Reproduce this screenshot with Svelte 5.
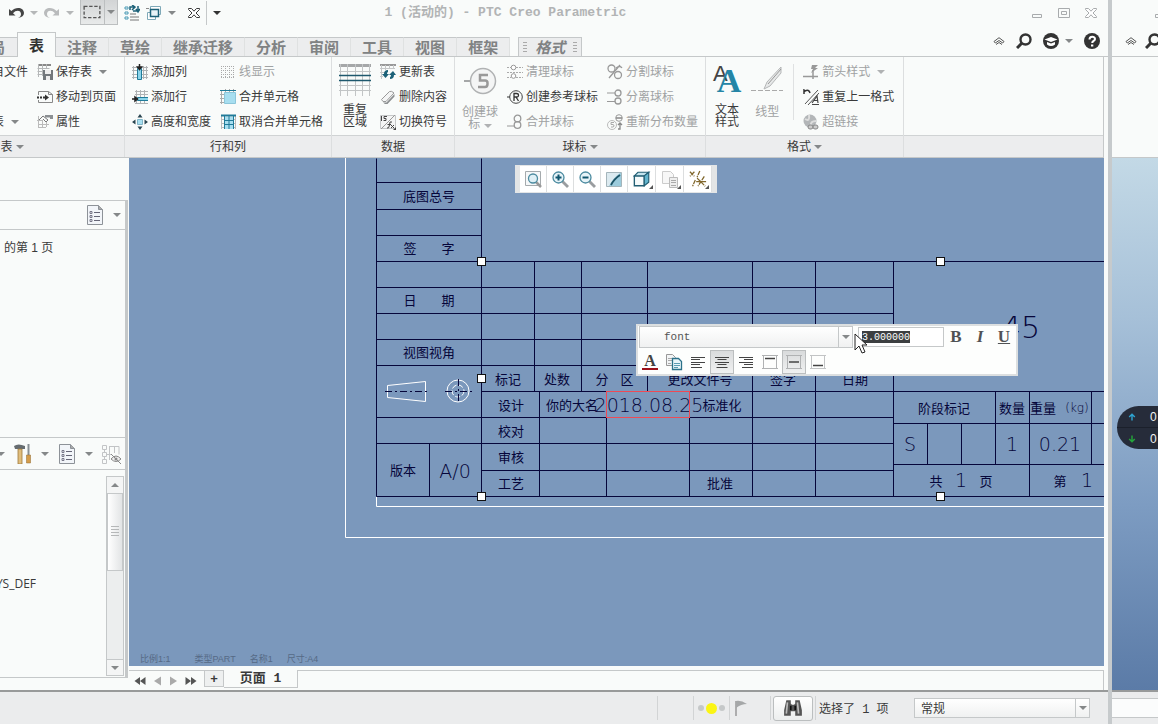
<script lang="ts">
  type Tool = { icon?: string; label: string; off?: boolean; menu?: boolean };

  /**
   * Inner markup of every icon, drawn on the view box given beside it.
   */
  const icons: Record<string, [string, string]> = {
    undo: ['0 0 16 14', '<path d="M1 3v6.500h6.500L5 7.200C8 3.500 13 4 13 8c0 2-1 3-3 4 4-.5 6-2.500 6-5C16 1.500 8 0 3.400 5z" fill="#444"/>'],
    redo: ['0 0 16 14', '<path d="M15 3v6.500H8.500L11 7.200C8 3.500 3 4 3 8c0 2 1 3 3 4-4-.5-6-2.500-6-5C0 1.500 8 0 12.600 5z" fill="#b9bbbc"/>'],
    marquee: ['0 0 16 14', '<rect x="1" y="2" width="14" height="10" fill="none" stroke="#555" stroke-width="1.200" stroke-dasharray="3 1.500"/>'],
    regen: ['0 0 16 16', '<path d="M1 2h3v2H1zM1 7h3v2H1zM1 12h3v2H1z" fill="none" stroke="#4a9ab5"/><path d="M6 12h9M6 15h9M6 9h6" stroke="#777"/><path d="M6 5V2h5M8 0l3 2-3 3M14 1v5H9M12 4l2 3 2-3" fill="none" stroke="#1c6178" stroke-width="1.500"/>'],
    windows: ['0 0 16 16', '<path d="M4.500 1.500h10v8h-10z" fill="#fff" stroke="#7fa9b8"/><path d="M1.500 7.500h8v7h-8z" fill="#fff" stroke="#7fa9b8"/><path d="M4.500 4.500h8v7h-8z" fill="#e8f3f7" stroke="#1c6178" stroke-width="1.500"/><path d="M0 3.500h3" stroke="#888"/>'],
    close: ['0 0 12 12', '<path d="M.5 1.500h3L6 4.200 8.500 1.500h3v1L8 6l3.500 3.500v1h-3L6 7.800l-2.500 2.700h-3v-1L4 6 .5 2.500z" fill="#fff" stroke="currentColor"/>'],
    min: ['0 0 12 12', '<path d="M1.500 7.500h9v3h-9z" fill="none" stroke="#a8abad"/>'],
    max: ['0 0 12 12', '<path d="M.5 1.500h11v9H.5zM3.500 4.500h5v3h-5z" fill="none" stroke="#a8abad"/>'],
    chevron: ['0 0 12 8', '<path d="M1 4.500L6 .7l5 3.800L9.700 6 6 3.500 2.300 6z" fill="none" stroke="#555"/><path d="M3 7.500l3-2 3 2" fill="none" stroke="#555"/>'],
    search: ['0 0 16 16', '<circle cx="9.500" cy="6.500" r="5" fill="none" stroke="#333" stroke-width="2.400"/><path d="M6 10l-5 5" stroke="#333" stroke-width="3"/>'],
    learn: ['0 0 16 16', '<circle cx="8" cy="8" r="8" fill="#333"/><path d="M1.500 6.500L8 4l6.500 2.500L8 9zM4 9v2.500q4 3 8 0V9L8 10.500z" fill="#fff"/>'],
    help: ['0 0 16 16', '<circle cx="8" cy="8" r="8" fill="#333"/><path d="M5.500 6.500C5.500 3 11 3 11 6c0 2-2.800 1.800-2.800 4" fill="none" stroke="#fff" stroke-width="2"/><path d="M7 11.500h2.300v2H7z" fill="#fff"/>'],
    save: ['0 0 16 16', '<path d="M1 1h13" stroke="#888" stroke-width="2"/><path d="M.5 4.500h12M.5 7.500h5M.5 10.500h5M1.500 0v13M5.500 0v12M9.500 0v5" stroke="#b5b7b8"/><path d="M6 6h10v10H6z" fill="#73787c"/><path d="M8 6h6v4H8zM9 12h4v4H9z" fill="#eee"/>'],
    toPage: ['0 0 16 16', '<path d="M1.500 6V2.500h10l4 3v8h-14V11M11.500 2.500v3h4" fill="none" stroke="#888"/><path d="M0 8.500h9" stroke="#333" stroke-width="2" stroke-dasharray="2 1"/><path d="M8 5.500l4 3-4 3z" fill="#333"/>'],
    props: ['0 0 16 16', '<path d="M1.500 2v12M5.500 6v8M9.500 8v5M0 6.500h6M1 10.500h11M1 13.500h8" stroke="#bbb"/><path d="M8 1h8v4h-3V3.500H8z" fill="#8c9093"/><path d="M2 6l4-4 5 4-2 2-3-3" fill="none" stroke="#777"/>'],
    addCol: ['0 0 16 16', '<path d="M0 3.500h16M0 6.500h16M0 10.500h16M0 13.500h16M1.500 2v13M11.500 2v13M14.500 2v13" stroke="#b0b3b5"/><path d="M5.500 4.500h4v11h-4z" fill="#8bd4ea" stroke="#207b99"/><path d="M7.500 0v3M5.500 3l2 2.500 2-2.500z" stroke="#222" fill="#222" stroke-width="1.500"/>'],
    addRow: ['0 0 16 16', '<path d="M3 2.500h13M3 5.500h13M3 14.500h13M4.500 1v14M8.500 1v14M12.500 1v14" stroke="#b0b3b5"/><path d="M5.500 8.500h11v3h-11z" fill="#8bd4ea" stroke="#207b99"/><path d="M0 10h3M3 8l2.500 2L3 12z" stroke="#222" fill="#222" stroke-width="1.500"/>'],
    size: ['0 0 16 16', '<path d="M5.500 5.500h5v5h-5z" fill="#a8dff0" stroke="#7fb5c8"/><path d="M8 0l2.500 3.500h-5zM8 16l2.500-3.500h-5zM0 8l3.500-2.500v5zM16 8l-3.500-2.500v5z" fill="#29444f"/>'],
    lines: ['0 0 16 16', '<path d="M1 2.500h13M1 6.500h13M1 10.500h13M1 13.500h13M1.500 2v12M5.500 2v12M9.500 2v12M13.500 2v12" stroke="#aaa" stroke-dasharray="1 1"/>'],
    merge: ['0 0 16 16', '<path d="M0 1.500h16M0 5.500h4M0 9.500h4M0 13.500h4M1.500 1v14M5.500 0v3M9.500 0v3M13.500 0v3" stroke="#aaa"/><path d="M4.500 3.500h11v11h-11z" fill="#a7def0" stroke="#8cc6da"/><path d="M0 1.500h16" stroke="#207b99"/>'],
    unmerge: ['0 0 16 16', '<path d="M1 5.500h14M1 9.500h14M1 13.500h14M1.500 1v14M15.500 1v14" stroke="#bbb"/><path d="M4 3h10v12H4z" fill="#a7def0"/><path d="M1 1.500h15" stroke="#207b99" stroke-width="2"/><path d="M4 6.500h10M4 10.500h10M4.500 2v13M9 2v13M13.500 2v13" stroke="#207b99"/>'],
    region: ['0 0 32 32', '<path d="M0 1.500h32" stroke="#a5a7a8" stroke-width="3"/><path d="M0 7.500h32M0 21.500h32M0 26.500h32M1.500 0v32M8.500 0v32M16.500 0v32M23.500 0v32M30.500 0v32" stroke="#c2c5c6"/><path d="M0 11.500h32M0 16.500h32" stroke="#1d586d" stroke-width="1.500"/>'],
    update: ['0 0 16 16', '<path d="M0 1h16" stroke="#999" stroke-width="2"/><path d="M0 4.500h15M0 8.500h5M0 12.500h3M1.500 1v14M5.500 1v5M9.500 1v4M13.500 1v4" stroke="#c5c7c8"/><path d="M8 6q-4 0-4 4H2l3.500 4L9 10H7q0-2 1-2zM10 15q4 0 4-4h2l-3-4-4 4h2q0 2-1 2z" fill="#1c6178"/>'],
    erase: ['0 0 16 16', '<path d="M1.500 10.500l8-8q2-1 4.500 1.500l-8 8.500H3z" fill="#f4f5f5" stroke="#999"/><path d="M3 13.500h3.500L14.500 5v2.500L7.500 15H5z" fill="#8c8f91"/>'],
    swap: ['0 0 16 16', '<path d="M.5 1.500h15v13H.5z" fill="#f4f5f5" stroke="#c5c7c8"/><path d="M1 15L15 1" stroke="#999"/><path d="M1.500 2v5M7 2.500H4v2h2v2H3.500M7 14q2 1 2.500-3L10 8h2M7.500 10.500H11M11 14l3-3M11 11l3 3" fill="none" stroke="#444"/><path d="M13 16h3v-3z" fill="#444"/>'],
    balloon: ['0 0 34 32', '<path d="M1 16h7" stroke="#a5a7a8" stroke-width="2"/><circle cx="20" cy="16" r="12.500" fill="#f4f5f5" stroke="#b0b2b3" stroke-width="1.500"/><path d="M25 10h-8v5.500h5q2.500 0 2.500 2.500v1q0 3-2.500 3h-7" fill="none" stroke="#999" stroke-width="2.500"/>'],
    clean: ['0 0 16 16', '<path d="M0 3.500h4M9 3.500h7M0 8.500h16M0 13.500h4M9 13.500h7" stroke="#aaa" stroke-dasharray="2 1"/><circle cx="6.500" cy="3.500" r="2.300" fill="#fff" stroke="#999"/><circle cx="6.500" cy="12" r="2.300" fill="#fff" stroke="#999"/>'],
    refBalloon: ['0 0 16 16', '<path d="M0 8h3" stroke="#333"/><circle cx="9" cy="8" r="6.300" fill="none" stroke="#444"/><path d="M7 12V4.500h2.500q2 0 2 1.800T9.500 8H7M9 8l2.500 4" fill="none" stroke="#333" stroke-width="1.300"/>'],
    joinBalloon: ['0 0 16 16', '<path d="M0 12h8" stroke="#999"/><circle cx="10.500" cy="4.500" r="3.300" fill="none" stroke="#999" stroke-width="1.300"/><circle cx="10.500" cy="11" r="3.300" fill="none" stroke="#999" stroke-width="1.300"/>'],
    splitBalloon: ['0 0 16 16', '<circle cx="4.500" cy="4.500" r="3.500" fill="none" stroke="#999" stroke-width="1.300"/><circle cx="11" cy="11" r="3.500" fill="none" stroke="#999" stroke-width="1.300"/><path d="M13 1L2 14M9 4q4-3 6 0" stroke="#999" stroke-width="1.300" fill="none"/>'],
    detach: ['0 0 16 16', '<path d="M0 4h8M0 12.500h8" stroke="#999"/><circle cx="11" cy="4" r="3" fill="none" stroke="#999" stroke-width="1.300"/><circle cx="11" cy="12" r="3" fill="none" stroke="#999" stroke-width="1.300"/>'],
    redistribute: ['0 0 16 16', '<circle cx="5" cy="11" r="4.500" fill="none" stroke="#bbb"/><path d="M7 8.500H4v2h2q1 0 1 1.500T4 13" fill="none" stroke="#aaa"/><circle cx="12" cy="4" r="3.300" fill="none" stroke="#999"/><path d="M9 4h6M11 15h2V9M11 11l2-2 2 2" fill="none" stroke="#888" stroke-width="1.300"/>'],
    lineType: ['0 0 34 32', '<path d="M1 25.500h32" stroke="#aaa" stroke-dasharray="5 2"/><path d="M31 2v6L20 21l-6 3 3-7z" fill="#e6e8e8" stroke="#b5b7b8"/><path d="M31 4L18 19" stroke="#999"/>'],
    arrowStyle: ['0 0 16 16', '<path d="M0 12.500h15M10 15V6" stroke="#999" stroke-width="1.500"/><path d="M9 1h6l-3 3h3L8 9l2-4H8z" fill="#999"/>'],
    repeat: ['0 0 16 16', '<path d="M2 15L15 1M5 16L16 4" stroke="#555"/><path d="M1 5V1l1 1q4-2 5 2" fill="none" stroke="#333" stroke-width="1.500"/><path d="M9 14l5-7 1 7M11 11.500h4M9 15.500h7" fill="none" stroke="#444" stroke-width="1.200"/>'],
    link: ['0 0 16 16', '<circle cx="7" cy="7" r="6.500" fill="#b3b6b8"/><path d="M2 5q5 3 4-4M8 12q-1-5 5-5" stroke="#ddd" stroke-width="2" fill="none"/><rect x="5" y="11" width="5" height="4" rx="2" fill="#ccc" stroke="#888"/><rect x="10" y="11" width="5" height="4" rx="2" fill="#ccc" stroke="#888"/>'],
    sheet: ['0 0 16 20', '<path d="M.5.500h11l4 4v15H.5z" fill="#f2f5f9" stroke="#8d9298"/><path d="M11.500.500v4h4" fill="#aaa" stroke="#8d9298"/><path d="M7 7.500h6M7 11.500h6M7 15.500h6" stroke="#667"/><path d="M3 6.500h2v2H3zM3 10.500h2v2H3zM3 14.500h2v2H3z" fill="none" stroke="#778"/>'],
    tools: ['0 0 18 20', '<path d="M0 2q4-3 11 0v3H1z" fill="#666c70"/><path d="M4 5h4v15H4z" fill="#e0bd7c" stroke="#a07a3a" stroke-width=".8"/><path d="M14.500 0v11" stroke="#888f94" stroke-width="2"/><path d="M12.500 11h4v8h-4z" fill="#d49c4b" stroke="#90682c" stroke-width=".5"/>'],
    tree: ['0 0 20 20', '<path d="M1.500 1.500h4v4h-4zM1.500 8.500h4v4h-4zM1.500 15.500h4v4h-4zM3.500 5v3M3.500 12v3M5 10.500h6M8.500 3v13M8 2.500h10v8M13.500 3v6" fill="none" stroke="#c2c4c6"/><path d="M10 15q5-6 10 0-5 5-10 0z" fill="#eee" stroke="#888"/><circle cx="15" cy="15" r="1.500" fill="#888"/><path d="M10 10l10 10" stroke="#888"/>'],
    fit: ['0 0 18 18', '<path d="M1.500 1.500h15v14h-15z" fill="#f6f8f9" stroke="#a5aaad"/><path d="M12 12l5 5" stroke="#999" stroke-width="2.500"/><circle cx="9" cy="8.500" r="4.500" fill="#dff0f6" stroke="#4c8ba0" stroke-width="1.300"/>'],
    zoomIn: ['0 0 18 18', '<path d="M10 10l7 7" stroke="#9a9da0" stroke-width="2.800"/><circle cx="7.500" cy="7.500" r="5.500" fill="#e6f3f8" stroke="#4c8ba0" stroke-width="1.300"/><path d="M4.500 7.500h6M7.500 4.500v6" stroke="#10566e" stroke-width="2"/>'],
    zoomOut: ['0 0 18 18', '<path d="M10 10l7 7" stroke="#9a9da0" stroke-width="2.800"/><circle cx="7.500" cy="7.500" r="5.500" fill="#e6f3f8" stroke="#4c8ba0" stroke-width="1.300"/><path d="M4.500 7.500h6" stroke="#10566e" stroke-width="2"/>'],
    repaint: ['0 0 18 18', '<path d="M1.500 2.500h15v14h-15z" fill="#9bcbdc" stroke="#a5b5bb"/><path d="M2 3h13Q8 8 4 16H2z" fill="#dceaf0"/><path d="M15 5Q9 9 6 15" stroke="#1c5366" stroke-width="1.800" fill="none"/>'],
    cube: ['0 0 20 18', '<path d="M1.500 5.500h11v11h-11z" fill="#f5fafb" stroke="#235f74" stroke-width="1.500"/><path d="M1.500 5.500l4-4h12l-5 4z" fill="#c4e4ee" stroke="#235f74" stroke-width="1.300"/><path d="M12.500 5.500l5-4v11l-5 4z" fill="#62b4cd" stroke="#235f74" stroke-width="1.300"/>'],
    views: ['0 0 18 18', '<path d="M1.500 1.500h8l3 3v9h-11z" fill="#f7f7f7" stroke="#ccc"/><path d="M8.500 7.500h8v10h-8z" fill="#eee" stroke="#bbb"/><path d="M10 10.500h5M10 12.500h5M10 15.500h5" stroke="#aaa"/>'],
    datum: ['0 0 20 18', '<path d="M1 1l5 5M6 1L1 6M12 0L9 7M7 10L4 17M17 6l-7 11M9 8l9 9M8 12h11" stroke="#81672c" stroke-width="1.400" stroke-dasharray="5 1"/>'],
    copy: ['0 0 18 18', '<path d="M1.500 1.500h6l3 3v8h-9z" fill="#f3f5f6" stroke="#999"/><path d="M3 5.500h5M3 7.500h5M3 10.500h3" stroke="#aaa"/><path d="M7.500 5.500h6l3 3v8h-9z" fill="#eaf6fa" stroke="#2b7189" stroke-width="1.300"/><path d="M9 10.500h6M9 12.500h6M9 14.500h4" stroke="#5a9cb2"/>'],
    left: ['0 0 18 18', '<path d="M2 4.500h14M2 6.500h9M2 9.500h14M2 11.500h9M2 14.500h11" stroke="#444"/>'],
    center: ['0 0 18 18', '<path d="M2 4.500h14M4.500 6.500h9M2 9.500h14M4.500 11.500h9M3.500 14.500h11" stroke="#444"/>'],
    right: ['0 0 18 18', '<path d="M2 4.500h14M7 6.500h9M2 9.500h14M7 11.500h9M5 14.500h11" stroke="#444"/>'],
    top: ['0 0 18 18', '<path d="M2.500 2v14M15.500 2v14M1 2.500h16M1 15.500h16" stroke="#b0b2b3"/><path d="M4 5.500h10" stroke="#444" stroke-width="1.500"/>'],
    middle: ['0 0 18 18', '<path d="M2.500 2v14M15.500 2v14M1 2.500h16M1 15.500h16" stroke="#b0b2b3"/><path d="M4 9h10" stroke="#444" stroke-width="1.500"/>'],
    bottom: ['0 0 18 18', '<path d="M2.500 2v14M15.500 2v14M1 2.500h16M1 15.500h16" stroke="#c2c4c5"/><path d="M4 12.500h10" stroke="#444" stroke-width="1.500"/>'],
    first: ['0 0 12 10', '<path d="M6 1v8L.5 5zM11.500 1v8L6 5z" fill="#555"/>'],
    prev: ['0 0 12 10', '<path d="M10 .500v9L3 5z" fill="#aaa"/>'],
    next: ['0 0 12 10', '<path d="M2 .500v9L9 5z" fill="#aaa"/>'],
    last: ['0 0 12 10', '<path d="M.5 1v8L6 5zM6 1v8l5.500-4z" fill="#555"/>'],
    flag: ['0 0 14 18', '<path d="M2 2v15" stroke="#999" stroke-width="1.500"/><path d="M2 2q5-1 11 3-6 0-11 4z" fill="#a5a7a8"/>'],
    find: ['0 0 18 18', '<path d="M3 2h4v3l1 1h2l1-1V2h4l2 9v5h-6v-4H7v4H1v-5z" fill="#555"/><path d="M4 4l-1 10M13 4l1 10" stroke="#bbb" stroke-width="1.500"/><path d="M7 7v4M11 7v4" stroke="#111" stroke-width="1.500"/>'],
    up: ['0 0 10 10', '<path d="M5 9.500V2M1.500 5L5 1.500 8.500 5" fill="none" stroke="#2ea3d0" stroke-width="1.800"/>'],
    down: ['0 0 10 10', '<path d="M5 .500V8M1.500 5L5 8.500 8.500 5" fill="none" stroke="#25a43b" stroke-width="1.800"/>'],
  };

  const tabs = ['注释', '草绘', '继承迁移', '分析', '审阅', '工具', '视图', '框架'];

  const tableTools: Tool[] = [
    { icon: 'save', label: '保存表', menu: true },
    { icon: 'toPage', label: '移动到页面' },
    { icon: 'props', label: '属性' },
  ];
  const rowTools: Tool[] = [
    { icon: 'addCol', label: '添加列' },
    { icon: 'addRow', label: '添加行' },
    { icon: 'size', label: '高度和宽度' },
  ];
  const cellTools: Tool[] = [
    { icon: 'lines', label: '线显示', off: true },
    { icon: 'merge', label: '合并单元格' },
    { icon: 'unmerge', label: '取消合并单元格' },
  ];
  const dataTools: Tool[] = [
    { icon: 'update', label: '更新表' },
    { icon: 'erase', label: '删除内容' },
    { icon: 'swap', label: '切换符号' },
  ];
  const balloonTools: Tool[] = [
    { icon: 'clean', label: '清理球标', off: true },
    { icon: 'refBalloon', label: '创建参考球标' },
    { icon: 'joinBalloon', label: '合并球标', off: true },
  ];
  const splitTools: Tool[] = [
    { icon: 'splitBalloon', label: '分割球标', off: true },
    { icon: 'detach', label: '分离球标', off: true },
    { icon: 'redistribute', label: '重新分布数量', off: true },
  ];
  const formatTools: Tool[] = [
    { icon: 'arrowStyle', label: '箭头样式', off: true, menu: true },
    { icon: 'repeat', label: '重复上一格式' },
    { icon: 'link', label: '超链接', off: true },
  ];

  const viewTools = [
    ['fit', '重新调整'],
    ['zoomIn', '放大'],
    ['zoomOut', '缩小'],
    ['repaint', '重画'],
    ['cube', '显示样式'],
    ['views', '视图管理器'],
    ['datum', '基准显示'],
  ];
  const alignTools = ['copy', 'left', 'center', 'right', 'top', 'middle', 'bottom'];
  const pressed = ['center', 'middle'];

  // Title block grid: [x1, y1, x2, y2]
  const rules = [
    ...[182, 209, 235, 287, 313, 339, 365].map((y) => [376, y, 481, y]),
    ...[261, 496].map((y) => [376, y, 1104, y]),
    ...[417, 443].map((y) => [376, y, 893, y]),
    ...[287, 313, 339, 365, 470].map((y) => [481, y, 893, y]),
    ...[391, 423, 464].map((y) => [y === 391 ? 481 : 893, y, 1104, y]),
    ...[376, 481].map((x) => [x, 158, x, 496]),
    ...[534, 581, 647].map((x) => [x, 261, x, 391]),
    ...[752, 815, 893].map((x) => [x, 261, x, 496]),
    ...[539, 606, 689].map((x) => [x, 391, x, 496]),
    ...[927, 961].map((x) => [x, 423, x, 464]),
    ...[995, 1091].map((x) => [x, 391, x, 464]),
    [429, 443, 429, 496],
    [1029, 391, 1029, 496],
  ];

  // Cell captions, centred on x and y
  const captions: [string, number, number][] = [
    ['底图总号', 429, 195],
    ['签', 410, 247],
    ['字', 448, 247],
    ['日', 410, 299],
    ['期', 448, 299],
    ['视图视角', 429, 351],
    ['标记', 508, 378],
    ['处数', 557, 378],
    ['分', 602, 378],
    ['区', 627, 378],
    ['更改文件号', 700, 378],
    ['签字', 783, 378],
    ['日期', 855, 378],
    ['设计', 511, 404],
    ['你的大名', 572, 404],
    ['标准化', 722, 404],
    ['校对', 511, 430],
    ['审核', 511, 456],
    ['工艺', 511, 482],
    ['批准', 720, 482],
    ['版本', 403, 469],
    ['阶段标记', 944, 407],
    ['数量', 1012, 407],
    ['重量', 1043, 407],
    ['共', 936, 480],
    ['页', 986, 480],
    ['第', 1060, 480],
  ];
  const values: [string, number, number][] = [
    ['A/0', 455, 471],
    ['2018.08.25', 649, 405],
    ['S', 910, 444],
    ['1', 1012, 444],
    ['0.21', 1060, 444],
    ['1', 961, 480],
    ['1', 1087, 480],
  ];
  const handles = [[481, 261], [940, 261], [481, 378], [481, 496], [940, 496]];

  let textHeight = $state('3.000000');
</script>

{#snippet icon(name: string, size = 16)}
  <svg class="icon" viewBox={icons[name][0]} width={size} height={size} aria-hidden="true">{@html icons[name][1]}</svg>
{/snippet}

{#snippet column(tools: Tool[])}
  <div class="column">
    {#each tools as tool}
      <button class="tool" disabled={tool.off}>
        {#if tool.icon}{@render icon(tool.icon)}{/if}
        <span>{tool.label}</span>
        {#if tool.menu}<i class="caret"></i>{/if}
      </button>
    {/each}
  </div>
{/snippet}

<div class="desktop">
  <main class="window">
    <header class="titlebar">
      <div class="quick">
        <button aria-label="撤消">{@render icon('undo')}</button>
        <i class="caret light"></i>
        <button aria-label="重做">{@render icon('redo')}</button>
        <i class="caret light"></i>
        <button class="split" aria-label="选择"><span>{@render icon('marquee', 18)}</span><i class="caret"></i></button>
        <button aria-label="重新生成">{@render icon('regen')}</button>
        <button aria-label="窗口">{@render icon('windows')}</button>
        <i class="caret"></i>
        <button class="shut" aria-label="关闭窗口">{@render icon('close', 12)}</button>
        <i class="caret custom"></i>
      </div>
      <h1>1 (活动的) - PTC Creo Parametric</h1>
      <div class="controls">
        <button aria-label="最小化">{@render icon('min', 12)}</button>
        <button aria-label="最大化">{@render icon('max', 12)}</button>
        <button aria-label="关闭">{@render icon('close', 12)}</button>
      </div>
    </header>

    <nav class="tabs">
      <button class="tab cut">局</button>
      <button class="tab active">表</button>
      {#each tabs as tab}
        <button class="tab">{tab}</button>
      {/each}
      <button class="tab context"><i class="grip"></i><em>格式</em><i class="grip"></i></button>
      <div class="help">
        <button aria-label="最小化功能区">{@render icon('chevron', 12)}</button>
        <button aria-label="搜索">{@render icon('search')}</button>
        <button aria-label="学习">{@render icon('learn')}<i class="caret"></i></button>
        <button aria-label="帮助">{@render icon('help')}</button>
      </div>
    </nav>

    <section class="ribbon">
      <div class="group">
        <div class="tools first">
          <div class="column clipped">
            <button class="tool">自文件</button>
            <span></span>
            <button class="tool short">表<i class="caret"></i></button>
          </div>
          {@render column(tableTools)}
        </div>
        <footer class="wide">表<i class="caret"></i></footer>
      </div>
      <div class="group">
        <div class="tools">
          {@render column(rowTools)}
          {@render column(cellTools)}
        </div>
        <footer>行和列</footer>
      </div>
      <div class="group">
        <div class="tools">
          <button class="big">{@render icon('region', 32)}<span>重复<br />区域</span></button>
          {@render column(dataTools)}
        </div>
        <footer>数据</footer>
      </div>
      <div class="group">
        <div class="tools">
          <button class="big" disabled>{@render icon('balloon', 34)}<span>创建球<br />标 <i class="caret"></i></span></button>
          {@render column(balloonTools)}
          {@render column(splitTools)}
        </div>
        <footer>球标<i class="caret"></i></footer>
      </div>
      <div class="group">
        <div class="tools">
          <button class="big"><span class="letters"><b>A</b><b>A</b></span><span>文本<br />样式</span></button>
          <button class="big" disabled>{@render icon('lineType', 34)}<span>线型</span></button>
          <i class="divider"></i>
          {@render column(formatTools)}
        </div>
        <footer>格式<i class="caret"></i></footer>
      </div>
      <div class="group">
        <div class="tools"></div>
        <footer></footer>
      </div>
    </section>

    <section class="workspace">
      <aside class="side">
        <div class="bar layers">{@render icon('sheet', 20)}<i class="caret"></i></div>
        <p class="sheet-name">的第 1 页</p>
        <div class="bar">
          <i class="caret"></i>
          {@render icon('tools', 20)}
          <i class="caret"></i>
          {@render icon('sheet', 20)}
          <i class="caret"></i>
          {@render icon('tree', 20)}
        </div>
        <div class="model-tree">
          <p><span>SYS_DEF</span></p>
          <div class="scrollbar">
            <button aria-label="向上滚动"><i class="caret flip"></i></button>
            <div class="thumb"><i></i></div>
            <button aria-label="向下滚动"><i class="caret"></i></button>
          </div>
        </div>
      </aside>

      <div class="sheet">
        <div class="canvas">
          <svg class="drawing" viewBox="129 158 975 508" preserveAspectRatio="xMinYMin slice">
            <g class="frame">
              <path d="M345.500 158V537.500H1104M376.500 497V506.500H1104" />
              <path d="M387.500 385.500L425.500 381.500V401.500L387.500 397.500Z" />
              <circle cx="458" cy="391" r="11" />
              <circle cx="458" cy="391" r="6" stroke-dasharray="5 2" />
            </g>
            <g class="rules">
              {#each rules as [x1, y1, x2, y2]}
                <path d="M{x1 + 0.5} {y1 + 0.5}L{x2 + 0.5} {y2 + 0.5}" />
              {/each}
              <path d="M385 391.500H430M445 391.500H472M458.500 379V404" stroke-dasharray="7 3 2 3" />
            </g>
            {#each captions as [text, x, y]}
              <text class="caption" {x} {y}>{text}</text>
            {/each}
            {#each values as [text, x, y]}
              <text class="value" {x} {y}>{text}</text>
            {/each}
            <text class="unit" x="1077" y="408">(kg)</text>
            <text class="part" x="1021" y="327">45</text>
            <rect class="picked" x="606.500" y="391.500" width="83" height="26" />
            {#each handles as [x, y]}
              <rect class="handle" x={x - 3.5} y={y - 3.5} width="8" height="8" />
            {/each}
          </svg>

          <div class="view-bar">
            {#each viewTools as [name, label]}
              <button class:more={['cube', 'views', 'datum'].includes(name)} aria-label={label}>{@render icon(name, 18)}</button>
            {/each}
          </div>

          <div class="format-bar">
            <div class="format-row">
              <div class="picker">
                <select aria-label="字体"><option>font</option></select>
                <i class="drop"></i>
              </div>
              <input aria-label="文本高度" bind:value={textHeight} />
              <button class="style"><b>B</b></button>
              <button class="style"><em>I</em></button>
              <button class="style"><u>U</u></button>
            </div>
            <div class="format-row">
              <button class="icon-button color" aria-label="文本颜色"><b>A</b></button>
              {#each alignTools as name}
                <button class="icon-button" class:pressed={pressed.includes(name)} aria-label={name}>{@render icon(name, 18)}</button>
              {/each}
            </div>
          </div>

          <svg class="cursor" viewBox="0 0 14 21" width="14" height="21" aria-hidden="true">
            <path d="M1 1v16l4-4 3 7 3-1-3-7h5z" fill="#fff" stroke="#222" />
          </svg>

          <p class="notes"><span>比例1:1</span><span>类型PART</span><span>名称1</span><span>尺寸:A4</span></p>
        </div>

        <div class="pages">
          <button aria-label="第一页">{@render icon('first', 12)}</button>
          <button aria-label="上一页">{@render icon('prev', 12)}</button>
          <button aria-label="下一页">{@render icon('next', 12)}</button>
          <button aria-label="最后一页">{@render icon('last', 12)}</button>
          <button class="add" aria-label="新页面">+</button>
          <button class="page">页面 1</button>
          <i class="rest"></i>
        </div>
      </div>
    </section>

    <footer class="status">
      <i class="cell"></i>
      <div class="cell lights"><i></i><i class="on"></i><i></i></div>
      <div class="cell flag">{@render icon('flag', 18)}</div>
      <div class="cell"><button class="find" aria-label="查找">{@render icon('find', 20)}</button></div>
      <p>选择了 1 项</p>
      <div class="picker">
        <select aria-label="选择过滤器"><option>常规</option></select>
        <i class="drop"></i>
      </div>
    </footer>
  </main>

  <aside class="window behind">
    <header class="titlebar">{@render icon('min', 12)}</header>
    <div class="tabs">{@render icon('chevron', 12)}{@render icon('search')}</div>
    <div class="ribbon"></div>
    <div class="sky"></div>
    <footer class="status"><i></i></footer>
  </aside>

  <div class="net-meter">
    <p>{@render icon('up', 8)}<span>0</span></p>
    <p>{@render icon('down', 8)}<span>0</span></p>
  </div>
</div>

<style>
  :global(body) {
    background: #f9fbfa;
    overflow: hidden;
  }

  .desktop {
    --line: #c5c8c9;
    --ink: #3a3a3a;
    position: relative;
    display: grid;
    grid-template-columns: minmax(0, 1fr) 46px;
    min-height: 100vh;
    font: 12px/14px "Liberation Sans", "Noto Sans CJK SC", sans-serif;
    color: var(--ink);
  }

  button,
  select,
  input {
    margin: 0;
    padding: 0;
    border: 0;
    background: none;
    font: inherit;
    color: inherit;
  }

  p,
  h1 {
    margin: 0;
  }

  .icon {
    display: block;
    flex: none;
  }

  .caret {
    display: inline-block;
    flex: none;
    border: 4px solid transparent;
    border-top-color: #858889;
    border-bottom: 0;
  }

  .caret.light {
    border-top-color: #b5b7b8;
  }

  .caret.flip {
    transform: rotate(180deg);
  }

  .window {
    display: grid;
    grid-template-rows: 25px 32px 101px minmax(0, 1fr) 34px;
    min-width: 0;
    background: #f9fbfa;
    border-right: 4px solid #c6cacc;
  }

  .titlebar,
  .quick,
  .controls,
  .help {
    display: flex;
    align-items: center;
  }

  .titlebar {
    justify-content: space-between;
  }

  .quick {
    flex: 4 0 0;
    gap: 6px;
    height: 100%;
    box-sizing: border-box;
    padding-left: 8px;
  }

  .quick .split {
    display: flex;
    align-items: center;
    height: 100%;
    border: 1px solid #bcbfc0;
    border-top: 0;
    background: linear-gradient(#d2d4d5, #e8eaea);
    box-sizing: border-box;
    padding-right: 2px;
  }

  .split span {
    display: flex;
    align-items: center;
    height: 100%;
    padding: 0 3px 0 2px;
    margin-right: 2px;
    border-right: 1px solid #bcbfc0;
  }

  .quick .shut {
    padding: 6px;
    border-right: 1px solid var(--line);
  }

  .quick .custom {
    border-top-color: #333;
  }

  h1 {
    font: bold 13px/16px "Liberation Mono", "Noto Sans CJK SC", monospace;
    color: #b2b4b5;
  }

  .controls {
    flex: 5 0 0;
    justify-content: flex-end;
    gap: 15px;
    box-sizing: border-box;
    padding-right: 11px;
    color: #a8abad;
  }

  .tabs {
    display: flex;
    align-items: flex-end;
    border-bottom: 1px solid var(--line);
  }

  .tab {
    height: 19px;
    padding: 0 11px;
    border-top: 1px solid var(--line);
    border-right: 1px solid #dfe1e1;
    background: #ecedee;
    font: bold 15px/18px "Noto Sans CJK SC", sans-serif;
    color: #808283;
  }

  .tab.cut {
    width: 17px;
    padding: 0 12px 0 0;
    display: flex;
    justify-content: flex-end;
    border-right: 0;
  }

  .tab.active {
    height: 25px;
    margin-bottom: -1px;
    border: 1px solid var(--line);
    border-bottom: 0;
    background: #f9fbfa;
    color: #333;
  }

  .tab.context {
    display: flex;
    align-items: center;
    gap: 8px;
    margin-left: 8px;
    padding: 0 4px;
    border-left: 1px solid var(--line);
    border-right-color: var(--line);
  }

  .grip {
    width: 4px;
    height: 10px;
    background: repeating-linear-gradient(#aaa 0 1px, transparent 1px 3px);
  }

  .help {
    gap: 11px;
    margin-left: auto;
    padding-right: 8px;
    height: 100%;
  }

  .help button {
    display: flex;
    align-items: center;
    gap: 6px;
  }

  .ribbon {
    display: grid;
    grid-template-columns: 125px 207px 123px 251px 198px minmax(0, 1fr);
    margin-right: 4px;
    border-right: 1px solid var(--line);
    border-bottom: 1px solid var(--line);
  }

  .group {
    display: grid;
    grid-template-rows: minmax(0, 1fr) 22px;
    min-width: 0;
    overflow: hidden;
    border-right: 1px solid #dcdedf;
  }

  .group:last-child {
    border-right: 0;
  }

  .tools {
    display: flex;
    align-items: flex-start;
    gap: 9px;
    padding: 3px 0 0 7px;
  }

  .tools.first {
    padding-left: 0;
  }

  .column {
    display: grid;
    grid-template-rows: repeat(3, 24px);
    row-gap: 1px;
  }

  .clipped {
    width: 28px;
    justify-items: end;
    justify-content: end;
  }

  .tool {
    display: flex;
    align-items: center;
    gap: 3px;
    white-space: nowrap;
  }

  .tool .caret {
    margin-left: 4px;
  }

  .tool.short {
    padding-right: 9px;
  }

  .tool:disabled,
  .big:disabled {
    color: #a0a2a3;
  }

  .tool:disabled .caret,
  .big:disabled .caret {
    border-top-color: #b0b2b3;
  }

  .big {
    display: flex;
    flex-direction: column;
    align-items: center;
    gap: 8px;
    padding-top: 4px;
    line-height: 12px;
  }

  .letters {
    display: flex;
    align-items: flex-end;
    height: 32px;
    font: bold 34px/30px "Liberation Serif", serif;
    color: #2585a6;
  }

  .letters b:first-child {
    align-self: flex-start;
    margin-right: -11px;
    font: 22px/20px "Liberation Sans", sans-serif;
    color: #444;
  }

  .divider {
    width: 1px;
    height: 56px;
    margin-top: 4px;
    background: #dfe1e2;
  }

  .group footer {
    display: flex;
    align-items: center;
    justify-content: center;
    gap: 3px;
    border-top: 1px solid #d0d3d4;
    background: #ecedee;
  }

  .group footer.wide {
    margin-left: -100px;
  }

  .workspace {
    display: grid;
    grid-template-columns: 129px minmax(0, 1fr);
    min-height: 0;
  }

  .side {
    display: grid;
    grid-template-columns: minmax(0, 1fr);
    grid-template-rows: 30px minmax(0, 208fr) 33px minmax(0, 208fr);
    margin: 42px 1px 12px 0;
    border-right: 3px solid var(--line);
    border-bottom: 1px solid var(--line);
  }

  .bar {
    display: flex;
    align-items: center;
    justify-content: flex-end;
    gap: 8px;
    overflow: hidden;
    padding-right: 4px;
    border-top: 1px solid var(--line);
    border-bottom: 1px solid var(--line);
  }

  .sheet-name {
    padding: 11px 4px;
  }

  .model-tree {
    display: flex;
    justify-content: space-between;
    padding: 6px 1px 1px 0;
  }

  .model-tree p {
    display: flex;
    align-items: center;
    justify-content: flex-end;
    width: 36px;
    padding-top: 16px;
    overflow: hidden;
    font-family: "Open Sans", sans-serif;
  }

  .scrollbar {
    display: grid;
    grid-template-rows: 16px minmax(0, 82fr) minmax(0, 92fr) 16px;
    width: 16px;
    border: 1px solid var(--line);
    background: #eceeee;
  }

  .scrollbar button {
    display: grid;
    place-items: center;
    background: #f4f5f5;
  }

  .scrollbar button:last-child {
    grid-row: 4;
    border-top: 1px solid var(--line);
  }

  .thumb {
    display: grid;
    place-items: center;
    border: 1px solid var(--line);
    background: linear-gradient(90deg, #fff, #e2e4e5);
  }

  .thumb i {
    width: 8px;
    height: 12px;
    background: repeating-linear-gradient(#b5b7b8 0 1px, transparent 1px 3px);
  }

  .sheet {
    display: grid;
    grid-template-rows: minmax(0, 1fr) 24px;
    margin-right: 4px;
    min-width: 0;
  }

  .canvas {
    position: relative;
    overflow: hidden;
    background: #7b98bc;
  }

  .drawing {
    display: block;
    width: 100%;
    height: 100%;
  }

  .frame {
    fill: none;
    stroke: #fff;
  }

  .rules {
    fill: none;
    stroke: #06063a;
  }

  .drawing text {
    fill: #06063a;
    text-anchor: middle;
    dominant-baseline: central;
  }

  .caption {
    font: 13px "Noto Sans CJK SC", sans-serif;
  }

  .value {
    font: 200 19px "DejaVu Sans", sans-serif;
  }

  .drawing .unit {
    font: 200 12px "DejaVu Sans", sans-serif;
  }

  .drawing .part {
    font: 200 30px "DejaVu Sans", sans-serif;
  }

  .picked {
    fill: none;
    stroke: #ee4a55;
  }

  .handle {
    fill: #fff;
    stroke: #111;
  }

  .view-bar {
    position: absolute;
    top: 7px;
    left: 386px;
    display: flex;
    border: 1px solid #e3e5e6;
    border-width: 1px 5px;
    background: #fff;
  }

  .view-bar button {
    position: relative;
    display: grid;
    place-items: center;
    width: 27px;
    height: 26px;
    border-right: 1px solid #dcdedf;
  }

  .view-bar .more {
    width: 28px;
  }

  .view-bar .more::after {
    content: "";
    position: absolute;
    right: 2px;
    bottom: 3px;
    border: 2px solid #555;
    border-top-color: transparent;
    border-left-color: transparent;
  }

  .format-bar {
    position: absolute;
    top: 166px;
    left: 507px;
    display: grid;
    gap: 2px;
    width: 378px;
    height: 48px;
    border: 2px solid #dcdfe0;
    background: #fdfefd;
  }

  .format-row {
    display: flex;
    align-items: center;
  }

  .picker {
    position: relative;
    display: flex;
    width: 214px;
    height: 22px;
    margin: 0 5px 0 1px;
  }

  .picker select {
    appearance: none;
    width: 100%;
    padding: 0 24px;
    border: 1px solid #c5c8c9;
    background: linear-gradient(#fff, #f0f1f1);
    font: 12px/18px "Liberation Mono", monospace;
  }

  .drop {
    position: absolute;
    top: 1px;
    right: 1px;
    bottom: 1px;
    display: grid;
    place-items: center;
    width: 13px;
    border-left: 1px solid #c5c8c9;
    pointer-events: none;
  }

  .drop::after {
    content: "";
    border: 4px solid transparent;
    border-top-color: #858889;
    border-bottom: 0;
  }

  .format-row .picker select {
    font-size: 11px;
    color: #555;
  }

  .format-row input {
    box-sizing: border-box;
    width: 86px;
    height: 20px;
    padding: 0 3px;
    border: 1px solid #c5c8c9;
    background: linear-gradient(#3c3f41, #3c3f41) 3px center / 48px 12px no-repeat #fff;
    font: 10px/12px "Liberation Mono", monospace;
    color: #fff;
  }

  .style {
    width: 24px;
    font: bold 17px/20px "Liberation Serif", serif;
    color: #505254;
  }

  .icon-button {
    box-sizing: border-box;
    display: grid;
    place-items: center;
    width: 24px;
    height: 24px;
  }

  .icon-button.pressed {
    border: 1px solid #bbbebf;
    background: linear-gradient(#d9dbdc, #f0f1f1);
  }

  .color b {
    width: 16px;
    border-bottom: 2px solid #9c1018;
    font: bold 16px/14px "Liberation Serif", serif;
    color: #444;
  }

  .cursor {
    position: absolute;
    top: 175px;
    left: 725px;
  }

  .notes {
    position: absolute;
    left: 11px;
    bottom: 0;
    display: flex;
    gap: 14px;
    font-size: 9px;
    line-height: 13px;
    color: #566a86;
  }

  .notes span:first-child {
    margin-right: 10px;
  }

  .pages {
    display: flex;
    align-items: center;
    gap: 5px;
    margin-top: 4px;
    padding-left: 5px;
    border-top: 1px solid var(--line);
  }

  .pages .add {
    box-sizing: border-box;
    align-self: flex-start;
    width: 20px;
    height: 16px;
    margin-left: 2px;
    border: 1px solid var(--line);
    border-top: 0;
    background: #eef0f0;
    font: bold 13px/14px "Liberation Sans", sans-serif;
  }

  .pages .page {
    width: 74px;
    height: 18px;
    margin: -3px 0 0 -5px;
    border-right: 1px solid var(--line);
    border-bottom: 1px solid var(--line);
    background: #f9fbfa;
    font: bold 13px/16px "Liberation Mono", "Noto Sans CJK SC", monospace;
  }

  .rest {
    flex: 1;
    align-self: stretch;
    margin-left: -5px;
    border-right: 1px solid var(--line);
  }

  .status {
    display: flex;
    align-items: center;
    border-top: 2px solid #989a9a;
    background: #ebeced;
  }

  .status .cell {
    box-sizing: border-box;
    display: flex;
    align-items: center;
    justify-content: center;
    align-self: stretch;
    width: 36px;
    margin: 4px 0;
    border-left: 1px solid #d2d4d5;
  }

  .status .cell:first-child {
    margin-left: auto;
  }

  .status .flag {
    width: 41px;
    justify-content: flex-start;
    padding-left: 2px;
  }

  .status .cell:nth-child(4) {
    width: 46px;
    border-right: 1px solid #d2d4d5;
  }

  .lights {
    gap: 2px;
  }

  .lights i {
    width: 6px;
    height: 6px;
    border-radius: 50%;
    background: #c5c8c9;
  }

  .lights .on {
    width: 11px;
    height: 11px;
    background: #fbf514;
  }

  .find {
    box-sizing: border-box;
    display: grid;
    place-items: center;
    width: 40px;
    height: 25px;
    border: 1px solid #bbbebf;
    border-radius: 3px;
    background: linear-gradient(#fff, #eceeee);
  }

  .status p {
    width: 95px;
    padding: 3px 0 0 3px;
    font-family: "Liberation Mono", "Noto Sans CJK SC", monospace;
    white-space: nowrap;
  }

  .status .picker {
    width: 176px;
    height: 20px;
    margin: 0 18px 0 0;
  }

  .status select {
    padding: 0 6px;
    font: 12px/16px "Noto Sans CJK SC", sans-serif;
  }

  .behind {
    border-right: 0;
    overflow: hidden;
  }

  .behind .titlebar {
    justify-content: flex-start;
    padding-left: 42px;
  }

  .behind .tabs {
    align-items: center;
    gap: 8px;
    padding-left: 13px;
  }

  .behind .ribbon {
    margin-right: 0;
  }

  .sky {
    background: linear-gradient(#c3d9e6, #a6c0d8 30%, #7d9cc2 65%, #5b7ba7);
  }

  .behind .status i {
    flex: 1;
    height: 18px;
    border: 1px solid var(--line);
    border-width: 1px 0;
    background: #fbfcfc;
  }

  .net-meter {
    position: absolute;
    top: 406px;
    right: 0;
    display: grid;
    width: 41px;
    height: 43px;
    border-radius: 22px 0 0 22px;
    background: #262c3a;
    color: #f1f3f5;
  }

  .net-meter p {
    display: flex;
    align-items: center;
    gap: 14px;
    padding-left: 11px;
  }

  .net-meter p:first-child {
    border-bottom: 1px solid #1b202b;
  }
</style>
